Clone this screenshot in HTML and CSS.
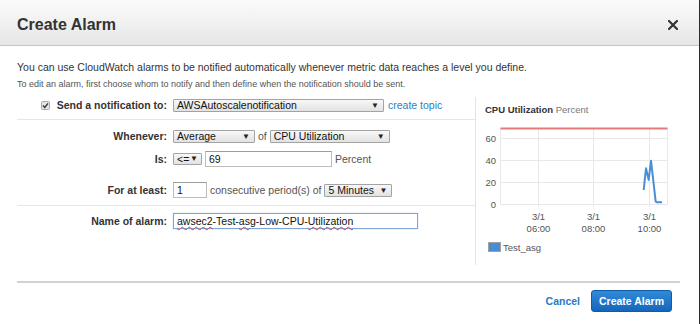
FILE: index.html
```html
<!DOCTYPE html>
<html lang="en">
<head>
    <meta charset="UTF-8">
    <meta name="viewport" content="width=device-width, initial-scale=1.0">
    <title>Create Alarm</title>
    <link rel="stylesheet" href="styles.css">
</head>
<body>
    <div class="modal">
        <div class="modal-header">
            <h1>Create Alarm</h1>
            <button class="close" aria-label="Close">
                <svg width="10" height="10" viewBox="0 0 10 10"><path d="M1 1L9 9M9 1L1 9" stroke="#333" stroke-width="2.2" stroke-linecap="square"/></svg>
            </button>
        </div>

        <div class="modal-body">
            <p class="intro">You can use CloudWatch alarms to be notified automatically whenever metric data reaches a level you define.</p>
            <p class="hint">To edit an alarm, first choose whom to notify and then define when the notification should be sent.</p>

            <div class="alarm-layout">
                <div class="alarm-form">
                    <!-- Notificación -->
                    <div class="form-section">
                        <div class="row">
                            <div class="row-label">
                                <svg class="checkbox" width="9" height="9" viewBox="0 0 9 9"><rect x="0.5" y="0.5" width="8" height="8" rx="1" fill="#e4e4e4" stroke="#a8a8a8"/><path d="M2 4.6L3.8 6.4L7 2.4" fill="none" stroke="#333" stroke-width="1.4"/></svg>
                                Send a notification to:
                            </div>
                            <div class="row-controls">
                                <span class="select select-topic">AWSAutoscalenotification</span>
                                <a class="link" href="#">create topic</a>
                            </div>
                        </div>
                    </div>

                    <!-- Condiciones -->
                    <div class="form-section">
                        <div class="row">
                            <div class="row-label">Whenever:</div>
                            <div class="row-controls">
                                <span class="select select-stat">Average</span>
                                <span class="muted">of</span>
                                <span class="select select-metric">CPU Utilization</span>
                            </div>
                        </div>
                        <div class="row row-is">
                            <div class="row-label">Is:</div>
                            <div class="row-controls">
                                <span class="select select-op">&lt;=</span>
                                <input class="text-input input-threshold" type="text" value="69">
                                <span class="muted">Percent</span>
                            </div>
                        </div>
                        <div class="row row-period">
                            <div class="row-label">For at least:</div>
                            <div class="row-controls">
                                <input class="text-input input-count" type="text" value="1">
                                <span class="muted">consecutive period(s) of</span>
                                <span class="select select-period">5 Minutes</span>
                            </div>
                        </div>
                    </div>

                    <!-- Nombre -->
                    <div class="form-section last">
                        <div class="row">
                            <div class="row-label">Name of alarm:</div>
                            <div class="row-controls">
                                <div class="text-input input-name"><span class="typo">awsec2</span>-Test-<span class="typo">asg</span>-Low-CPU-<span class="typo">Utilization</span></div>
                            </div>
                        </div>
                    </div>
                </div>

                <div class="chart">
                    <div class="chart-title"><b>CPU Utilization</b> Percent</div>
                    <svg class="chart-svg" width="195" height="133" viewBox="0 0 195 133">
                        <g stroke="#e8e8e8" stroke-width="1">
                            <line x1="15.5" y1="16.5" x2="182.5" y2="16.5"/>
                            <line x1="15.5" y1="38.5" x2="182.5" y2="38.5"/>
                            <line x1="15.5" y1="60.5" x2="182.5" y2="60.5"/>
                            <line x1="15.5" y1="82.5" x2="182.5" y2="82.5"/>
                            <line x1="15.5" y1="6" x2="15.5" y2="82.5"/>
                            <line x1="53.5" y1="6" x2="53.5" y2="85"/>
                            <line x1="108.5" y1="6" x2="108.5" y2="85"/>
                            <line x1="164.5" y1="6" x2="164.5" y2="85"/>
                            <line x1="182.5" y1="6" x2="182.5" y2="82.5"/>
                        </g>
                        <line x1="15.5" y1="6.5" x2="182.5" y2="6.5" stroke="#e27c7c" stroke-width="2"/>
                        <g class="axis" text-anchor="end">
                            <text x="11" y="20">60</text>
                            <text x="11" y="42">40</text>
                            <text x="11" y="64">20</text>
                            <text x="11" y="86">0</text>
                        </g>
                        <g class="axis" text-anchor="middle">
                            <text x="53.5" y="97.5">3/1</text>
                            <text x="53.5" y="109.5">06:00</text>
                            <text x="108.5" y="97.5">3/1</text>
                            <text x="108.5" y="109.5">08:00</text>
                            <text x="164.5" y="97.5">3/1</text>
                            <text x="164.5" y="109.5">10:00</text>
                        </g>
                        <polyline points="158.7,68 161,46.3 163.7,58 166,38.7 170.7,79.7 172,80.3 177,80.3" fill="none" stroke="#4a8fd6" stroke-width="2" stroke-linejoin="round"/>
                        <rect x="3.5" y="120.5" width="12" height="9" fill="#4b8dd3" stroke="#a0a0a0"/>
                        <text class="legend" x="18" y="128.5">Test_asg</text>
                    </svg>
                </div>
            </div>

            <div class="modal-footer">
                <a class="btn-link" href="#">Cancel</a>
                <button class="btn-primary">Create Alarm</button>
            </div>
        </div>
    </div>
</body>
</html>
```

FILE: styles.css
```css
* {
    margin: 0;
    padding: 0;
    box-sizing: border-box;
}

body {
    font-family: 'Liberation Sans', Arial, Helvetica, sans-serif;
    color: #333;
    background: #fff;
}

.modal {
    width: 700px;
    height: 324px;
    background: #fff;
    border-right: 1px solid #2b2b2b;
    overflow: hidden;
}

.modal-header {
    height: 46px;
    display: flex;
    justify-content: space-between;
    align-items: center;
    padding: 4px 21px 0 17px;
    background: linear-gradient(#fbfbfb, #e6e6e6);
    border-bottom: 1px solid #c6c6c6;
}

.modal-header h1 {
    font-size: 16px;
    font-weight: bold;
    color: #333;
}

.close {
    display: flex;
    border: none;
    background: none;
    cursor: pointer;
}

.modal-body {
    padding: 13px 19px 0 17px;
}

.intro {
    font-size: 10.5px;
    line-height: 16px;
    color: #333;
}

.hint {
    margin-top: 3px;
    font-size: 9px;
    line-height: 13px;
    color: #555;
}

.alarm-layout {
    display: flex;
    margin-top: 6px;
}

.alarm-form {
    width: 458px;
}

.form-section {
    padding: 8px 0 7px;
    border-bottom: 1px solid #e6e6e6;
}

.form-section:first-child {
    padding: 0 0 6px;
}

.form-section.last {
    padding-top: 7px;
    border-bottom: none;
}

.row {
    display: grid;
    grid-template-columns: 150px 1fr;
    column-gap: 6px;
    align-items: center;
    height: 16px;
}

.row-is {
    margin-top: 7px;
}

.row-period {
    margin-top: 15px;
}

.row-label {
    display: flex;
    justify-content: flex-end;
    align-items: center;
    gap: 7px;
    font-size: 10.5px;
    font-weight: bold;
    color: #333;
    white-space: nowrap;
}

.row-controls {
    display: flex;
    align-items: center;
    gap: 3px;
    font-size: 10.5px;
    white-space: nowrap;
}

.muted {
    color: #555;
}

.link {
    margin-left: 1px;
    color: #2d7dc6;
    text-decoration: none;
}

.select {
    position: relative;
    display: inline-block;
    height: 13px;
    line-height: 11px;
    padding-left: 3px;
    border: 1px solid #a3a3a3;
    border-radius: 1px;
    background: linear-gradient(#f8f8f8, #e2e2e2);
    color: #111;
    font-size: 10.5px;
}

.select::after {
    content: "\25BC";
    position: absolute;
    right: 4px;
    top: 0;
    font-size: 8px;
    line-height: 11px;
    color: #222;
}

.select-topic { width: 211px; }
.select-stat { width: 82px; }
.select-metric { width: 120px; }
.select-op { width: 29px; height: 12px; line-height: 10px; }
.select-op::after { line-height: 10px; right: 3px; }
.select-period { width: 68px; }

.text-input {
    display: inline-block;
    height: 16px;
    padding: 0 3px;
    border: 1px solid #bcbcbc;
    border-top-color: #9c9c9c;
    background: #fff;
    font-family: inherit;
    font-size: 10.5px;
    line-height: 14px;
    color: #111;
    outline: none;
}

.input-threshold { width: 127px; }
.input-count { width: 34px; }

.input-name {
    width: 245px;
    border: 1px solid #7ea6d6;
    box-shadow: 0 0 1px #9cbde3;
}

.typo {
    text-decoration: underline wavy #e04040;
    text-decoration-thickness: 1px;
    text-underline-offset: 1px;
}

.chart {
    flex: 1;
    border-left: 1px solid #e3e3e3;
    padding: 6px 0 10px 9px;
}

.chart-title {
    font-size: 9.5px;
    line-height: 14px;
    color: #777;
}

.chart-title b {
    color: #333;
}

.chart-svg {
    display: block;
    margin-top: 5px;
}

.axis text,
.legend {
    font-family: 'Liberation Sans', Arial, sans-serif;
    font-size: 9.5px;
    fill: #555;
}

.modal-footer {
    display: flex;
    justify-content: flex-end;
    align-items: center;
    gap: 11px;
    margin-top: 16px;
    padding: 7px 8px 0 0;
    border-top: 2px solid #d2d2d2;
}

.btn-link {
    font-size: 10.5px;
    font-weight: bold;
    color: #2a7ac6;
    text-decoration: none;
}

.btn-primary {
    width: 81px;
    height: 22px;
    border: 1px solid #125ca6;
    border-radius: 3px;
    background: linear-gradient(#318ad9, #1566ba);
    color: #fff;
    font-family: inherit;
    font-size: 10.5px;
    font-weight: bold;
    cursor: pointer;
}
```
